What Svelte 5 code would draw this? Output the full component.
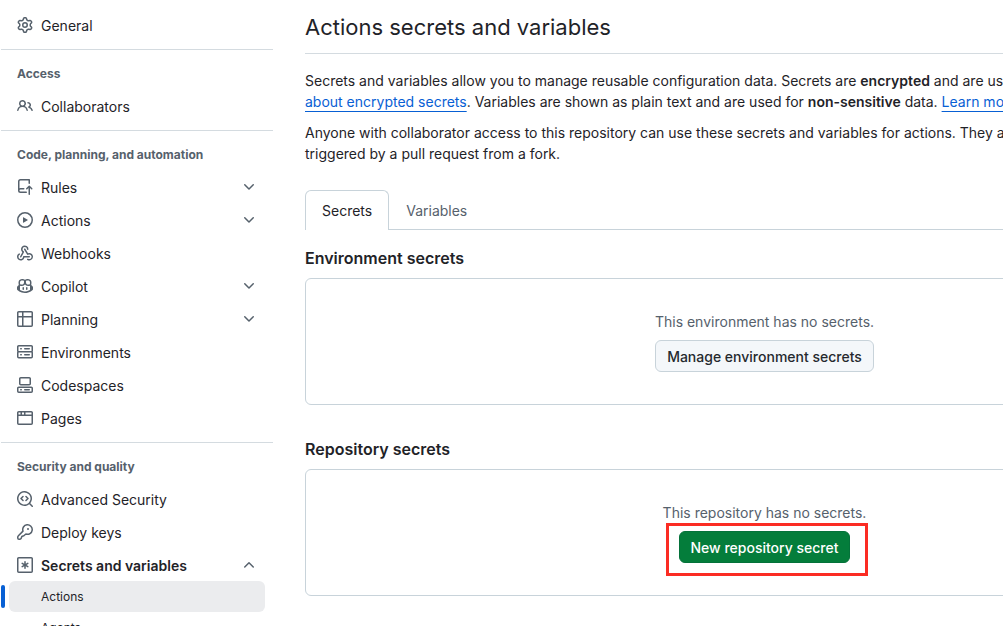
<script lang="ts">
  type Item = { label: string; icon: string; expand?: 'down' | 'up'; sub?: string[] };
  type Group = { title?: string; items: Item[] };

  const icons: Record<string, string> = {
    gear: 'M8 0a8.2 8.2 0 0 1 .701.031C9.444.095 9.99.645 10.16 1.29l.288 1.107c.018.066.079.158.212.224.231.114.454.243.668.386.123.082.233.09.299.071l1.103-.303c.644-.176 1.392.021 1.82.63.27.385.506.792.704 1.218.315.675.111 1.422-.364 1.891l-.814.806c-.049.048-.098.147-.088.294.016.257.016.515 0 .772-.01.147.038.246.088.294l.814.806c.475.469.679 1.216.364 1.891a7.977 7.977 0 0 1-.704 1.217c-.428.61-1.176.807-1.82.63l-1.102-.302c-.067-.019-.177-.011-.3.071a5.909 5.909 0 0 1-.668.386c-.133.066-.194.158-.211.224l-.29 1.106c-.168.646-.715 1.196-1.458 1.26a8.006 8.006 0 0 1-1.402 0c-.743-.064-1.289-.614-1.458-1.26l-.289-1.106c-.018-.066-.079-.158-.212-.224a5.738 5.738 0 0 1-.668-.386c-.123-.082-.233-.09-.299-.071l-1.103.303c-.644.176-1.392-.021-1.82-.63a8.12 8.12 0 0 1-.704-1.218c-.315-.675-.111-1.422.363-1.891l.815-.806c.05-.048.098-.147.088-.294a6.214 6.214 0 0 1 0-.772c.01-.147-.038-.246-.088-.294l-.815-.806C.635 6.045.431 5.298.746 4.623a7.92 7.92 0 0 1 .704-1.217c.428-.61 1.176-.807 1.82-.63l1.102.302c.067.019.177.011.3-.071.214-.143.437-.272.668-.386.133-.066.194-.158.211-.224l.29-1.106C6.009.645 6.556.095 7.299.03 7.53.01 7.764 0 8 0Zm-.571 1.525c-.036.003-.108.036-.137.146l-.289 1.105c-.147.561-.549.967-.998 1.189-.173.086-.34.183-.5.29-.417.278-.97.423-1.529.27l-1.103-.303c-.109-.03-.175.016-.195.045-.22.312-.412.644-.573.99-.014.031-.021.11.059.19l.815.806c.411.406.562.957.53 1.456a4.709 4.709 0 0 0 0 .582c.032.499-.119 1.05-.53 1.456l-.815.806c-.081.08-.073.159-.059.19.162.346.353.677.573.989.02.03.085.076.195.046l1.102-.303c.56-.153 1.113-.008 1.53.27.161.107.328.204.501.29.447.222.85.629.997 1.189l.289 1.105c.029.109.101.143.137.146a6.6 6.6 0 0 0 1.142 0c.036-.003.108-.036.137-.146l.289-1.105c.147-.561.549-.967.998-1.189.173-.086.34-.183.5-.29.417-.278.97-.423 1.529-.27l1.103.303c.109.029.175-.016.195-.045.22-.313.411-.644.573-.99.014-.031.021-.11-.059-.19l-.815-.806c-.411-.406-.562-.957-.53-1.456a4.709 4.709 0 0 0 0-.582c-.032-.499.119-1.05.53-1.456l.815-.806c.081-.08.073-.159.059-.19a6.464 6.464 0 0 0-.573-.989c-.02-.03-.085-.076-.195-.046l-1.102.303c-.56.153-1.113.008-1.53-.27a4.44 4.44 0 0 0-.501-.29c-.447-.222-.85-.629-.997-1.189l-.289-1.105c-.029-.11-.101-.143-.137-.146a6.6 6.6 0 0 0-1.142 0ZM11 8a3 3 0 1 1-6 0 3 3 0 0 1 6 0ZM9.5 8a1.5 1.5 0 1 0-3.001.001A1.5 1.5 0 0 0 9.5 8Z',
    people: 'M2 5.5a3.5 3.5 0 1 1 5.898 2.549 5.508 5.508 0 0 1 3.034 4.084.75.75 0 1 1-1.482.235 4 4 0 0 0-7.9 0 .75.75 0 0 1-1.482-.236A5.507 5.507 0 0 1 3.102 8.05 3.493 3.493 0 0 1 2 5.5ZM11 4a3.001 3.001 0 0 1 2.22 5.018 5.01 5.01 0 0 1 2.56 3.012.749.749 0 0 1-.885.954.752.752 0 0 1-.549-.514 3.507 3.507 0 0 0-2.522-2.372.75.75 0 0 1-.574-.73v-.352a.75.75 0 0 1 .416-.672A1.5 1.5 0 0 0 11 5.5.75.75 0 0 1 11 4Zm-5.5-.5a2 2 0 1 0-.001 3.999A2 2 0 0 0 5.5 3.5Z',
    push: 'M1 2.5A2.5 2.5 0 0 1 3.5 0h8.75a.75.75 0 0 1 .75.75v3.5a.75.75 0 0 1-1.5 0V1.5h-8a1 1 0 0 0-1 1v6.708A2.493 2.493 0 0 1 3.5 9h3.25a.75.75 0 0 1 0 1.5H3.5a1 1 0 0 0 0 2h5.75a.75.75 0 0 1 0 1.5H3.5A2.5 2.5 0 0 1 1 11.5Zm13.23 7.79a.75.75 0 0 0 1.06-1.06l-2.505-2.505a.75.75 0 0 0-1.06 0L9.22 9.229a.75.75 0 0 0 1.06 1.061l1.225-1.224v6.184a.75.75 0 0 0 1.5 0V9.066Z',
    play: 'M8 0a8 8 0 1 1 0 16A8 8 0 0 1 8 0ZM1.5 8a6.5 6.5 0 1 0 13 0 6.5 6.5 0 0 0-13 0Zm4.879-2.773 4.264 2.559a.25.25 0 0 1 0 .428l-4.264 2.559A.25.25 0 0 1 6 10.559V5.442a.25.25 0 0 1 .379-.215Z',
    webhook: 'M5.5 4.25a2.25 2.25 0 0 1 4.5 0 .75.75 0 0 0 1.5 0 3.75 3.75 0 1 0-6.14 2.889l-2.272 4.258a.75.75 0 0 0 1.324.706L7 7.25a.75.75 0 0 0-.309-1.015A2.25 2.25 0 0 1 5.5 4.25Z M7.364 3.607a.75.75 0 0 1 1.03.257l2.608 4.349a3.75 3.75 0 1 1-.628 6.785.75.75 0 0 1 .752-1.299 2.25 2.25 0 1 0-.033-3.88.75.75 0 0 1-1.03-.256L7.107 4.636a.75.75 0 0 1 .257-1.03Z M2.9 8.776A.75.75 0 0 1 2.625 9.8 2.25 2.25 0 1 0 6 11.75a.75.75 0 0 1 .75-.751h5.5a.75.75 0 0 1 0 1.5H7.425a3.751 3.751 0 1 1-5.55-3.998.75.75 0 0 1 1.024.274Z',
    copilot: 'M7.998 15.035c-4.562 0-7.873-2.914-7.998-3.749V9.338c.085-.628.677-1.686 1.588-2.065.013-.07.024-.143.036-.218.029-.183.06-.384.126-.612-.201-.508-.254-1.084-.254-1.656 0-.87.128-1.769.693-2.484.579-.733 1.494-1.124 2.724-1.261 1.206-.134 2.262.034 2.944.765.05.053.096.108.139.165.044-.057.094-.112.143-.165.682-.731 1.738-.899 2.944-.765 1.23.137 2.145.528 2.724 1.261.566.715.693 1.614.693 2.484 0 .572-.053 1.148-.254 1.656.066.228.098.429.126.612.012.076.024.148.037.218.924.385 1.522 1.471 1.591 2.095v1.872c0 .766-3.351 3.795-8.002 3.795Zm0-1.485c2.28 0 4.584-1.11 5.002-1.433V7.862l-.023-.116c-.49.21-1.075.291-1.727.291-1.146 0-2.059-.327-2.71-.991A3.222 3.222 0 0 1 8 6.303a3.24 3.24 0 0 1-.544.743c-.65.664-1.563.991-2.71.991-.652 0-1.236-.081-1.727-.291l-.023.116v4.255c.419.323 2.722 1.433 5.002 1.433ZM6.762 2.83c-.193-.206-.637-.413-1.682-.297-1.019.113-1.479.404-1.713.7-.247.312-.369.789-.369 1.554 0 .793.129 1.171.308 1.371.162.181.519.379 1.442.379.853 0 1.339-.235 1.638-.54.315-.322.527-.827.617-1.553.117-.935-.037-1.395-.241-1.614Zm4.155-.297c-1.044-.116-1.488.091-1.681.297-.204.219-.359.679-.242 1.614.091.726.303 1.231.618 1.553.299.305.784.54 1.638.54.922 0 1.28-.198 1.442-.379.179-.2.308-.578.308-1.371 0-.765-.123-1.242-.37-1.554-.233-.296-.693-.587-1.713-.7Z M6.25 9.037a.75.75 0 0 1 .75.75v1.501a.75.75 0 0 1-1.5 0V9.787a.75.75 0 0 1 .75-.75Zm4.25.75v1.501a.75.75 0 0 1-1.5 0V9.787a.75.75 0 0 1 1.5 0Z',
    table: 'M0 1.75C0 .784.784 0 1.75 0h12.5C15.216 0 16 .784 16 1.75v12.5A1.75 1.75 0 0 1 14.25 16H1.75A1.75 1.75 0 0 1 0 14.25ZM6.5 6.5v8h7.75a.25.25 0 0 0 .25-.25V6.5Zm8-1.5V1.75a.25.25 0 0 0-.25-.25H6.5V5Zm-13 1.5v7.75c0 .138.112.25.25.25H5v-8ZM5 5V1.5H1.75a.25.25 0 0 0-.25.25V5Z',
    server: 'M1.75 1h12.5c.966 0 1.75.784 1.75 1.75v4c0 .372-.116.717-.314 1 .198.283.314.628.314 1v4a1.75 1.75 0 0 1-1.75 1.75H1.75A1.75 1.75 0 0 1 0 12.75v-4c0-.358.109-.707.314-1a1.739 1.739 0 0 1-.314-1v-4C0 1.784.784 1 1.75 1ZM1.5 2.75v4c0 .138.112.25.25.25h12.5a.25.25 0 0 0 .25-.25v-4a.25.25 0 0 0-.25-.25H1.75a.25.25 0 0 0-.25.25Zm.25 5.75a.25.25 0 0 0-.25.25v4c0 .138.112.25.25.25h12.5a.25.25 0 0 0 .25-.25v-4a.25.25 0 0 0-.25-.25ZM7 4.75A.75.75 0 0 1 7.75 4h4.5a.75.75 0 0 1 0 1.5h-4.5A.75.75 0 0 1 7 4.75ZM7.75 10h4.5a.75.75 0 0 1 0 1.5h-4.5a.75.75 0 0 1 0-1.5ZM3 4.75A.75.75 0 0 1 3.75 4h.5a.75.75 0 0 1 0 1.5h-.5A.75.75 0 0 1 3 4.75ZM3.75 10h.5a.75.75 0 0 1 0 1.5h-.5a.75.75 0 0 1 0-1.5Z',
    codespaces: 'M0 11.25c0-.966.784-1.75 1.75-1.75h12.5c.966 0 1.75.784 1.75 1.75v3A1.75 1.75 0 0 1 14.25 16H1.75A1.75 1.75 0 0 1 0 14.25Zm2-9.5C2 .784 2.784 0 3.75 0h8.5C13.216 0 14 .784 14 1.75v5a1.75 1.75 0 0 1-1.75 1.75h-8.5A1.75 1.75 0 0 1 2 6.75Zm1.75-.25a.25.25 0 0 0-.25.25v5c0 .138.112.25.25.25h8.5a.25.25 0 0 0 .25-.25v-5a.25.25 0 0 0-.25-.25Zm-2 9.5a.25.25 0 0 0-.25.25v3c0 .138.112.25.25.25h12.5a.25.25 0 0 0 .25-.25v-3a.25.25 0 0 0-.25-.25Z M7 12.75a.75.75 0 0 1 .75-.75h4.5a.75.75 0 0 1 0 1.5h-4.5a.75.75 0 0 1-.75-.75Zm-4 0a.75.75 0 0 1 .75-.75h.5a.75.75 0 0 1 0 1.5h-.5a.75.75 0 0 1-.75-.75Z',
    browser: 'M0 2.75C0 1.784.784 1 1.75 1h12.5c.966 0 1.75.784 1.75 1.75v10.5A1.75 1.75 0 0 1 14.25 15H1.75A1.75 1.75 0 0 1 0 13.25ZM14.5 6h-13v7.25c0 .138.112.25.25.25h12.5a.25.25 0 0 0 .25-.25Zm-6-3.5v2h6V2.75a.25.25 0 0 0-.25-.25ZM5 2.5v2h2v-2Zm-3.25 0a.25.25 0 0 0-.25.25V4.5h2v-2Z',
    codescan: 'M8.47 4.97a.75.75 0 0 0 0 1.06L9.94 7.5 8.47 8.97a.75.75 0 1 0 1.06 1.06l2-2a.75.75 0 0 0 0-1.06l-2-2a.75.75 0 0 0-1.06 0ZM6.53 6.03a.75.75 0 0 0-1.06-1.06l-2 2a.75.75 0 0 0 0 1.06l2 2a.75.75 0 1 0 1.06-1.06L5.06 7.5l1.47-1.47Z M12.246 13.307a7.501 7.501 0 1 1 1.06-1.06l2.474 2.473a.749.749 0 1 1-1.06 1.06l-2.474-2.473ZM1.5 7.5a6.002 6.002 0 0 0 3.608 5.504 6.002 6.002 0 0 0 6.486-1.117.748.748 0 0 1 .292-.293A6 6 0 1 0 1.5 7.5Z',
    asterisk: 'M1.75 0h12.5C15.216 0 16 .784 16 1.75v12.5A1.75 1.75 0 0 1 14.25 16H1.75A1.75 1.75 0 0 1 0 14.25V1.75C0 .784.784 0 1.75 0ZM1.5 1.75v12.5c0 .138.112.25.25.25h12.5a.25.25 0 0 0 .25-.25V1.75a.25.25 0 0 0-.25-.25H1.75a.25.25 0 0 0-.25.25ZM8 4a.75.75 0 0 1 .75.75V6.7l1.69-.975a.75.75 0 0 1 .75 1.3L9.5 8l1.69.975a.75.75 0 0 1-.75 1.3L8.75 9.3v1.95a.75.75 0 0 1-1.5 0V9.3l-1.69.975a.75.75 0 0 1-.75-1.3L6.5 8l-1.69-.975a.75.75 0 0 1 .75-1.3l1.69.975V4.75A.75.75 0 0 1 8 4Z',
    down: 'M12.78 5.22a.749.749 0 0 1 0 1.06l-4.25 4.25a.749.749 0 0 1-1.06 0L3.22 6.28a.749.749 0 1 1 1.06-1.06L8 8.939l3.72-3.719a.749.749 0 0 1 1.06 0Z',
    up: 'M3.22 10.53a.749.749 0 0 1 0-1.06l4.25-4.25a.749.749 0 0 1 1.06 0l4.25 4.25a.749.749 0 1 1-1.06 1.06L8 6.811 4.28 10.53a.749.749 0 0 1-1.06 0Z'
  };

  const groups: Group[] = [
    { items: [{ label: 'General', icon: 'gear' }] },
    { title: 'Access', items: [{ label: 'Collaborators', icon: 'people' }] },
    {
      title: 'Code, planning, and automation',
      items: [
        { label: 'Rules', icon: 'push', expand: 'down' },
        { label: 'Actions', icon: 'play', expand: 'down' },
        { label: 'Webhooks', icon: 'webhook' },
        { label: 'Copilot', icon: 'copilot', expand: 'down' },
        { label: 'Planning', icon: 'table', expand: 'down' },
        { label: 'Environments', icon: 'server' },
        { label: 'Codespaces', icon: 'codespaces' },
        { label: 'Pages', icon: 'browser' }
      ]
    },
    {
      title: 'Security and quality',
      items: [
        { label: 'Advanced Security', icon: 'codescan' },
        { label: 'Deploy keys', icon: 'key' },
        { label: 'Secrets and variables', icon: 'asterisk', expand: 'up', sub: ['Actions', 'Agents'] }
      ]
    }
  ];

  let currentSub = $state('Actions');
  let tab = $state('Secrets');
</script>

{#snippet icon(name: string)}
  <svg viewBox="0 0 16 16" width="16" height="16" aria-hidden="true">
    {#if name == 'key'}
      <path
        class="line"
        d="M6 7.1 1.4 11.7c-.4.4-.65.8-.65 1.4v.9c0 .7.55 1.25 1.25 1.25h.9c.6 0 1.1-.3 1.3-.9.3-.8.3-1.7 1-2.1.6-.3 1.4-.2 1.9-.7L8.9 10A4.75 4.75 0 1 0 6 7.1Z"
      />
      <circle cx="11" cy="5" r="1" />
    {:else}
      <path d={icons[name]} />
    {/if}
  </svg>
{/snippet}

<div class="page">
  <nav class="sidebar" aria-label="Settings">
    {#each groups as group}
      <div class="group">
        {#if group.title}
          <h2>{group.title}</h2>
        {/if}
        <ul>
          {#each group.items as item (item.label)}
            <li>
              {#if item.expand}
                <button class="item" class:open={item.expand == 'up'} aria-expanded={item.expand == 'up'}>
                  {@render icon(item.icon)}
                  <span class="label">{item.label}</span>
                  {@render icon(item.expand)}
                </button>
              {:else}
                <a class="item" href="#settings">
                  {@render icon(item.icon)}
                  <span class="label">{item.label}</span>
                </a>
              {/if}
              {#if item.sub}
                <div class="sub">
                  {#each item.sub as s (s)}
                    <a href="#{s}" class:current={currentSub == s} onclick={() => (currentSub = s)}>{s}</a>
                  {/each}
                </div>
              {/if}
            </li>
          {/each}
        </ul>
      </div>
    {/each}
  </nav>

  <main>
    <h1>Actions secrets and variables</h1>

    <p>
      Secrets and variables allow you to manage reusable configuration data. Secrets are <strong>encrypted</strong>
      and are used for sensitive data. <a href="#secrets">Learn more about encrypted secrets</a>. Variables are shown
      as plain text and are used for <strong>non-sensitive</strong> data.
      <a href="#variables">Learn more about variables</a>.
    </p>
    <p>
      Anyone with collaborator access to this repository can use these secrets and variables for actions. They are not
      passed to workflows that are triggered by a pull request from a fork.
    </p>

    <div class="tabs" role="tablist">
      {#each ['Secrets', 'Variables'] as t}
        <button role="tab" class:selected={tab == t} aria-selected={tab == t} onclick={() => (tab = t)}>{t}</button>
      {/each}
    </div>

    <section>
      <h3>Environment secrets</h3>
      <div class="blank">
        <span>This environment has no secrets.</span>
        <button class="btn">Manage environment secrets</button>
      </div>
    </section>

    <section>
      <h3>Repository secrets</h3>
      <div class="blank">
        <span>This repository has no secrets.</span>
        <div class="marked">
          <button class="btn primary">New repository secret</button>
        </div>
      </div>
    </section>
  </main>
</div>

<style>
  :global(body) {
    overflow: hidden;
    background: #fff;
  }

  .page {
    display: flex;
    gap: 32px;
    height: 100vh;
    overflow: hidden;
    padding-left: 1px;
    box-sizing: border-box;
    color: #1f2328;
    font-family: Inter, 'Liberation Sans', sans-serif;
    font-size: 14px;
    line-height: 21px;
  }

  button {
    font: inherit;
    color: inherit;
    cursor: pointer;
  }

  svg {
    flex: none;
    fill: #56616c;
  }

  .line {
    fill: none;
    stroke: #56616c;
    stroke-width: 1.5;
    stroke-linejoin: round;
  }

  .sidebar {
    flex: 0 0 272px;
    padding-top: 9px;
  }

  .group + .group {
    margin-top: 8px;
    padding-top: 8px;
    border-top: 1px solid #d4dbe0;
  }

  h2 {
    margin: 0 0 1px;
    padding: 0 16px;
    color: #56616c;
    font-size: 12px;
    font-weight: 700;
    line-height: 31px;
  }

  ul {
    display: flex;
    flex-direction: column;
    gap: 1px;
    margin: 0;
    padding: 0 8px;
    list-style: none;
  }

  .item {
    display: flex;
    align-items: center;
    gap: 8px;
    box-sizing: border-box;
    width: 100%;
    height: 32px;
    padding: 0 8px;
    border: 0;
    border-radius: 6px;
    background: none;
    color: inherit;
    text-align: left;
    text-decoration: none;
  }

  .label {
    flex: 1;
  }

  .open {
    font-weight: 600;
  }

  .sub a {
    display: block;
    position: relative;
    padding-left: 32px;
    border-radius: 6px;
    color: inherit;
    font-size: 12px;
    line-height: 31px;
    text-decoration: none;
  }

  .sub .current {
    background: #ebecee;
  }

  .sub .current::before {
    content: '';
    position: absolute;
    top: 4px;
    bottom: 4px;
    left: -8px;
    width: 4px;
    border-radius: 6px;
    background: #0860d4;
  }

  /* wide content column, runs past narrow windows instead of wrapping tighter */
  main {
    flex: 1 0 919px;
    padding-top: 10px;
  }

  h1 {
    margin: 0 0 16px;
    padding-bottom: 8px;
    border-bottom: 1px solid #d4dbe0;
    font-size: 22px;
    font-weight: 400;
    line-height: 35px;
  }

  p {
    margin: 0 -24px 10px 0;
  }

  p a {
    color: #0860d4;
    text-decoration: underline;
    text-underline-offset: 4px;
  }

  strong {
    font-weight: 600;
  }

  .tabs {
    display: flex;
    margin: 26px 0 16px;
    border-bottom: 1px solid #c8d3da;
  }

  .tabs button {
    height: 39px;
    padding: 0 16px;
    border: 1px solid transparent;
    border-bottom: 0;
    border-radius: 6px 6px 0 0;
    background: none;
    color: #56616c;
  }

  .tabs .selected {
    height: 40px;
    margin-bottom: -1px;
    border-color: #c8d3da;
    background: #fff;
    color: #1f2328;
  }

  section {
    margin-bottom: 32px;
  }

  h3 {
    margin: 0 0 8px;
    font-size: 16px;
    font-weight: 600;
    line-height: 24px;
  }

  .blank {
    display: flex;
    flex-direction: column;
    align-items: center;
    gap: 8px;
    padding: 32px;
    border: 1px solid #c8d3da;
    border-radius: 6px;
    color: #56616c;
  }

  .btn {
    display: block;
    height: 32px;
    padding: 0 11px;
    border: 1px solid #c8d3da;
    border-radius: 6px;
    background: #f4f7fa;
    color: #25292e;
    font-weight: 500;
  }

  .primary {
    border-color: #04723a;
    background: #047d3b;
    color: #fff;
  }

  .marked {
    position: relative;
  }

  .marked::after {
    content: '';
    position: absolute;
    inset: -8px -18px -13px -13px;
    border: 3px solid #fb2c23;
    pointer-events: none;
  }
</style>
